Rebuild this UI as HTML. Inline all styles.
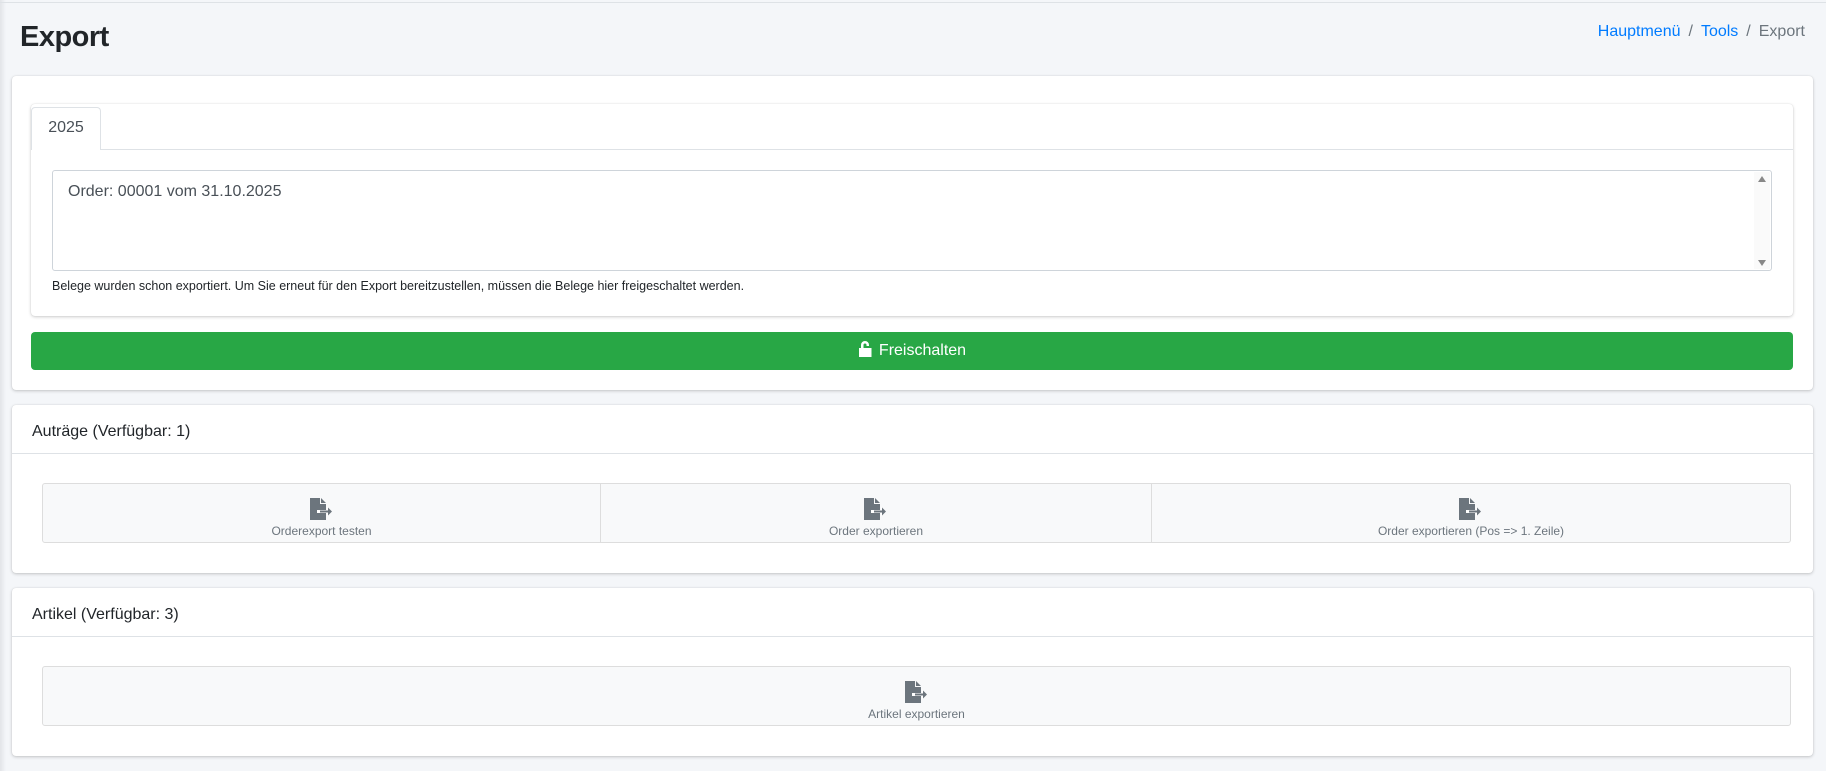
<!DOCTYPE html>
<html><head><meta charset="utf-8"><style>
*{box-sizing:border-box;margin:0;padding:0}
body{width:1826px;height:771px;background:#f4f6f9;font-family:"Liberation Sans",sans-serif;color:#212529;position:relative;overflow:hidden}
.topline{position:absolute;left:0;top:2px;width:1826px;height:1px;background:#dee2e6}
.lshadow{position:absolute;left:0;top:0;width:6px;height:771px;background:linear-gradient(to right,#e2e4e8,#f4f6f9)}
h1{position:absolute;left:20px;top:19px;font-size:29px;font-weight:bold;line-height:36px;letter-spacing:-0.5px}
.bc{position:absolute;right:21px;top:23px;font-size:16px;color:#6c757d}
.bc a{color:#007bff;text-decoration:none}
.bc span{margin:0 8px}
.card{position:absolute;background:#fff;border-radius:4px;box-shadow:0 0 1px rgba(0,0,0,.13),0 1px 3px rgba(0,0,0,.2)}
.tabcard{position:absolute;left:31px;top:104px;width:1762px;height:212px;border-radius:4px;box-shadow:0 0 1px rgba(0,0,0,.13),0 1px 3px rgba(0,0,0,.2);background:#fff}
.tabline{position:absolute;left:0;right:0;top:45px;height:1px;background:#dee2e6}
.tab{position:absolute;left:0;top:3px;width:70px;height:43px;background:#fff;border:1px solid #dee2e6;border-bottom:none;border-radius:4px 4px 0 0;font-size:16px;text-align:center;line-height:40px;color:#495057}
.ta{position:absolute;left:21px;top:66px;width:1720px;height:101px;border:1px solid #ced4da;border-radius:3px;font-size:16px;color:#495057;padding:12px 15px}
.sb{position:absolute;right:1px;top:1px;width:16px;bottom:1px;background:#fafafa}
.help{position:absolute;left:21px;top:175px;font-size:12.5px;color:#212529}
.green{position:absolute;left:31px;top:332px;width:1762px;height:38px;background:#28a745;border-radius:4px;color:#fff;font-size:16px;text-align:center;line-height:38px}
.hdr{position:absolute;left:0;right:0;top:0;height:49px;border-bottom:1px solid #dee2e6;font-size:16px;padding:18px 20px 0}
.grp{position:absolute;background:#f8f9fa;border:1px solid #ddd;border-radius:3px;display:flex}
.btn{flex:none;height:100%;text-align:center;font-size:12px;color:#6c757d;padding-top:14px;border-right:1px solid #ddd}
.btn:last-child{border-right:none}
.btn svg{display:block;margin:0 auto 4px}
</style></head><body>
<div class="lshadow"></div><div class="topline"></div>
<h1>Export</h1>
<div class="bc"><a>Hauptmenü</a><span>/</span><a>Tools</a><span>/</span>Export</div>

<div class="card" style="left:12px;top:76px;width:1801px;height:314px"></div>
<div class="tabcard">
 <div class="tabline"></div>
 <div class="tab">2025</div>
 <div class="ta">Order: 00001 vom 31.10.2025<div class="sb"><svg width="16" height="99" style="position:absolute;left:0;top:0"><path d="M4 10L8 4L12 10Z" fill="#888"/><path d="M4 88L12 88L8 94Z" fill="#888"/></svg></div></div>
 <div class="help">Belege wurden schon exportiert. Um Sie erneut für den Export bereitzustellen, müssen die Belege hier freigeschaltet werden.</div>
</div>
<div class="green"><svg width="16" height="17" viewBox="0 0 16 17" style="vertical-align:-2px;margin-right:5px"><path d="M3 8V5a4 4 0 0 1 8 0v1H8.5V5a1.5 1.5 0 0 0-3 0v3h8v9H1V8z" fill="#fff"/></svg>Freischalten</div>

<div class="card" style="left:12px;top:405px;width:1801px;height:168px">
 <div class="hdr">Auträge (Verfügbar: 1)</div>
 <div class="grp" style="left:30px;top:78px;width:1749px;height:60px">
  <div class="btn" style="width:558px"><svg width="24" height="22" viewBox="0 0 24 22"><path d="M0 0h10v6h6v16H0z M11 0l5 5h-5z" fill="#6c757d"/><path d="M7 12h10v-3.5l5 5-5 5V15H7z" fill="#fff"/><path d="M10 12.5h8v-3l4 4-4 4v-3h-8z" fill="#6c757d"/></svg>Orderexport testen</div>
  <div class="btn" style="width:551px"><svg width="24" height="22" viewBox="0 0 24 22"><path d="M0 0h10v6h6v16H0z M11 0l5 5h-5z" fill="#6c757d"/><path d="M7 12h10v-3.5l5 5-5 5V15H7z" fill="#fff"/><path d="M10 12.5h8v-3l4 4-4 4v-3h-8z" fill="#6c757d"/></svg>Order exportieren</div>
  <div class="btn" style="flex:1"><svg width="24" height="22" viewBox="0 0 24 22"><path d="M0 0h10v6h6v16H0z M11 0l5 5h-5z" fill="#6c757d"/><path d="M7 12h10v-3.5l5 5-5 5V15H7z" fill="#fff"/><path d="M10 12.5h8v-3l4 4-4 4v-3h-8z" fill="#6c757d"/></svg>Order exportieren (Pos =&gt; 1. Zeile)</div>
 </div>
</div>

<div class="card" style="left:12px;top:588px;width:1801px;height:168px">
 <div class="hdr">Artikel (Verfügbar: 3)</div>
 <div class="grp" style="left:30px;top:78px;width:1749px;height:60px">
  <div class="btn" style="flex:1"><svg width="24" height="22" viewBox="0 0 24 22"><path d="M0 0h10v6h6v16H0z M11 0l5 5h-5z" fill="#6c757d"/><path d="M7 12h10v-3.5l5 5-5 5V15H7z" fill="#fff"/><path d="M10 12.5h8v-3l4 4-4 4v-3h-8z" fill="#6c757d"/></svg>Artikel exportieren</div>
 </div>
</div>
</body></html>
